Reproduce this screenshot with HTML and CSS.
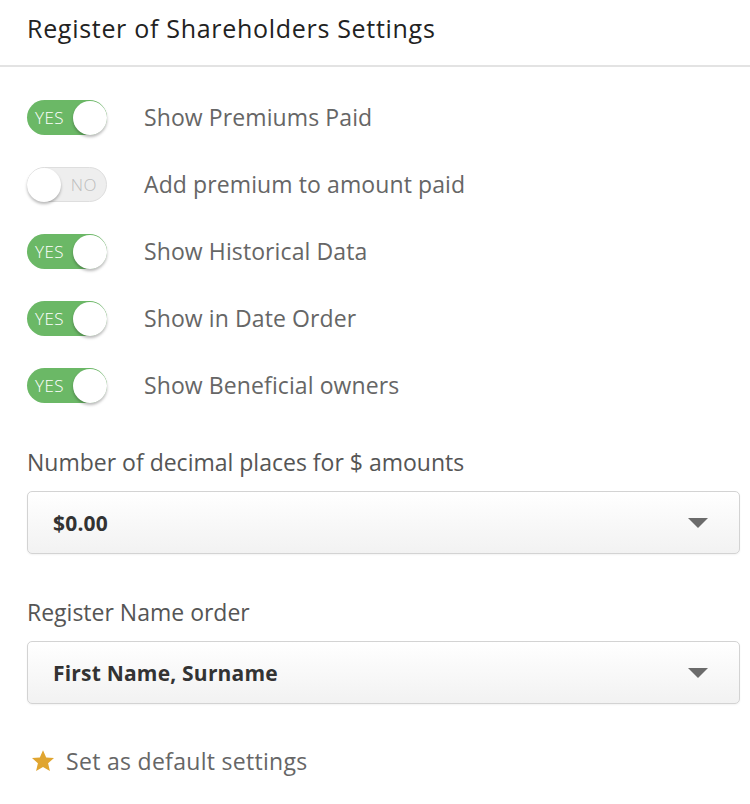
FILE: index.html
```html
<!DOCTYPE html>
<html>
<head>
<meta charset="utf-8">
<link rel="stylesheet" href="styles.css">
</head>
<body>
<div class="panel">
  <div class="header"><h1 class="title">Register of Shareholders Settings</h1></div>
  <div class="body">
    <ul class="toggles">
      <li class="row"><span class="toggle on"><span class="tlabel">YES</span><span class="knob"></span></span><span class="label">Show Premiums Paid</span></li>
      <li class="row"><span class="toggle off"><span class="knob"></span><span class="tlabel">NO</span></span><span class="label">Add premium to amount paid</span></li>
      <li class="row"><span class="toggle on"><span class="tlabel">YES</span><span class="knob"></span></span><span class="label">Show Historical Data</span></li>
      <li class="row"><span class="toggle on"><span class="tlabel">YES</span><span class="knob"></span></span><span class="label">Show in Date Order</span></li>
      <li class="row"><span class="toggle on"><span class="tlabel">YES</span><span class="knob"></span></span><span class="label">Show Beneficial owners</span></li>
    </ul>
    <div class="field first">
      <div class="flabel">Number of decimal places for $ amounts</div>
      <div class="select"><span class="value">$0.00</span><span class="caret"></span></div>
    </div>
    <div class="field second">
      <div class="flabel">Register Name order</div>
      <div class="select"><span class="value">First Name, Surname</span><span class="caret"></span></div>
    </div>
    <div class="default">
      <svg class="star" width="24" height="24" viewBox="0 0 24 24"><path d="M12 1.2l3.2 7.2 7.8.7-5.9 5.2 1.8 7.7L12 18l-6.9 4 1.8-7.7L1 9.1l7.8-.7z" fill="#e0a530"/></svg>
      <span class="dlabel">Set as default settings</span>
    </div>
  </div>
</div>
</body>
</html>
```
FILE: styles.css
```css
* { box-sizing: border-box; }
html, body { margin: 0; padding: 0; background: #fff; }
body { font-family: "Open Sans", "Liberation Sans", sans-serif; color: #666; width: 750px; }
.header { height: 67px; border-bottom: 2px solid #e3e3e3; padding: 13px 27px 0; }
.title { margin: 0; font-size: 25px; font-weight: 400; color: #222; line-height: 30px; letter-spacing: 0.7px; }
.body { padding: 0 10px 0 27px; }
.toggles { list-style: none; margin: 0; padding: 33px 0 0; }
.row { height: 67px; display: flex; align-items: flex-start; }
.toggle { width: 80px; height: 35px; border-radius: 18px; display: flex; align-items: center; flex: none; position: relative; }
.toggle.on { background: #6bb866; justify-content: space-between; padding: 0 0 0 8px; }
.toggle.off { background: #eeeeee; border: 1px solid #dedede; padding: 0 9px 0 0; justify-content: space-between; }
.tlabel { font-size: 17px; font-weight: 300; letter-spacing: 0.5px; }
.on .tlabel { color: #fff; }
.off .tlabel { color: #bdbdbd; }
.knob { width: 34px; height: 34px; border-radius: 50%; background: #fff; box-shadow: 0 2px 3px rgba(0,0,0,0.28); }
.off .knob { margin-left: -1px; }
.label { margin-left: 37px; font-size: 23px; line-height: 35px; color: #666; letter-spacing: 0.1px; }
.flabel { font-size: 23px; line-height: 28px; color: #555; }
.field.first { margin-top: 13px; }
.select { margin-top: 15px; height: 63px; border: 1px solid #d3d3d3; border-radius: 5px; background: linear-gradient(#ffffff, #f2f2f2); display: flex; align-items: center; justify-content: space-between; padding: 0 31px 0 25px; box-shadow: 0 1px 2px rgba(0,0,0,0.05); }
.value { font-size: 21px; font-weight: 700; color: #333; letter-spacing: 0.2px; }
.caret { width: 0; height: 0; border-left: 10px solid transparent; border-right: 10px solid transparent; border-top: 10px solid #6b6b6b; }
.field.second { margin-top: 44px; }
.default { display: flex; align-items: center; margin-top: 41px; padding-left: 4px; }
.star { flex: none; }
.dlabel { margin-left: 11px; font-size: 23px; color: #666; letter-spacing: 0.3px; }
```
